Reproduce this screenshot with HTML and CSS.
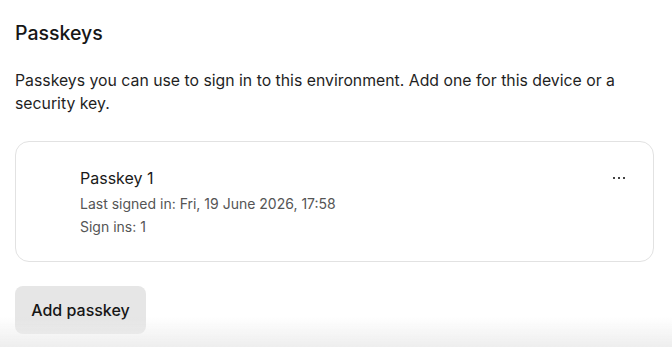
FILE: index.html
```html
<!DOCTYPE html>
<html lang="en">
<head>
<meta charset="utf-8">
<link rel="stylesheet" href="styles.css">
</head>
<body>
<main class="page">
  <h2 class="title">Passkeys</h2>
  <p class="desc">Passkeys you can use to sign in to this environment. Add one for this device or a security key.</p>
  <div class="card">
    <div class="card-body">
      <div class="name">Passkey 1</div>
      <div class="meta">Last signed in: Fri, 19 June 2026, 17:58</div>
      <div class="meta">Sign ins: 1</div>
    </div>
    <button class="more" aria-label="More options">
      <svg width="12" height="2" viewBox="0 0 12 2"><rect x="0" y="0" width="2" height="2" fill="#444"/><rect x="5" y="0" width="2" height="2" fill="#444"/><rect x="10" y="0" width="2" height="2" fill="#444"/></svg>
    </button>
  </div>
  <button class="add">Add passkey</button>
</main>
<div class="fade"></div>
</body>
</html>
```
FILE: styles.css
```css
html, body {
  margin: 0;
  padding: 0;
  background: #fff;
}
body {
  font-family: Inter, "Noto Sans", sans-serif;
  color: #1a1a1a;
  overflow: hidden;
  height: 347px;
}
.page {
  padding: 21px 18px 0 15px;
}
.title {
  margin: 0;
  font-size: 19.5px;
  font-weight: 500;
  line-height: 24px;
  color: #161616;
}
.desc {
  margin: 24px 0 0;
  font-size: 15.8px;
  line-height: 23px;
  color: #1f1f1f;
  max-width: 620px;
}
.card {
  margin-top: 26px;
  border: 1px solid #e2e2e2;
  border-radius: 14px;
  height: 121px;
  box-sizing: border-box;
  display: flex;
  justify-content: space-between;
  align-items: flex-start;
  padding: 22px 28px 0 64px;
}
.card-body {
  display: flex;
  flex-direction: column;
}
.name {
  font-size: 16px;
  line-height: 28px;
  color: #1a1a1a;
}
.meta {
  font-size: 14px;
  line-height: 23px;
  color: #555;
}
.more {
  border: 0;
  background: none;
  padding: 0;
  margin-top: 10px;
  width: 12px;
  height: 8px;
  display: flex;
  align-items: center;
  justify-content: center;
  cursor: pointer;
}
.add {
  margin-top: 24px;
  border: 0;
  border-radius: 8px;
  background: #e6e6e6;
  color: #161616;
  font-family: Inter, "Noto Sans", sans-serif;
  font-size: 16px;
  font-weight: 500;
  width: 131px;
  height: 48px;
  padding: 0;
}
.fade {
  position: fixed;
  left: 0;
  right: 0;
  bottom: 0;
  height: 30px;
  background: linear-gradient(to bottom, rgba(240,240,240,0), rgba(236,236,236,0.9));
  pointer-events: none;
}
```
